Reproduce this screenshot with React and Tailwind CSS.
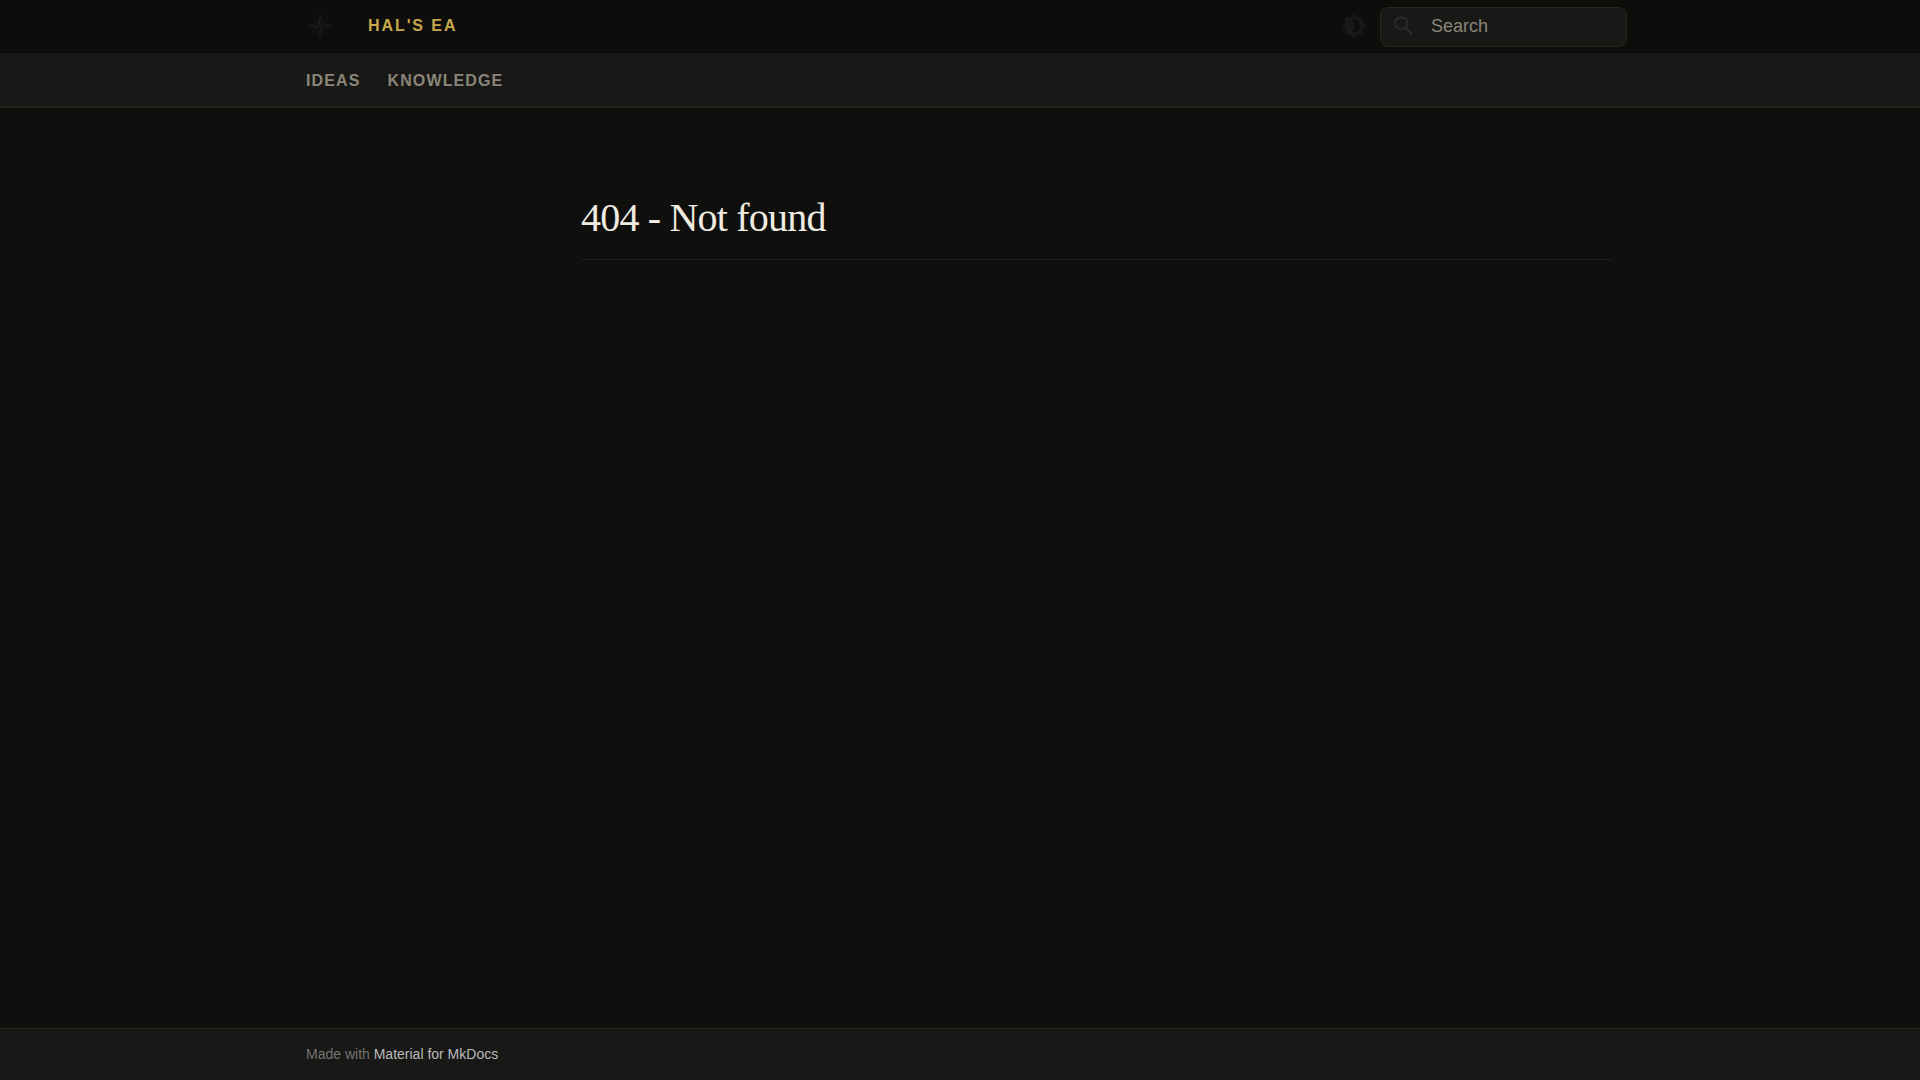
import React, { useState } from 'react';
import { MdSearch } from 'react-icons/md';

const tabs = [
  { label: 'IDEAS', href: '#ideas' },
  { label: 'KNOWLEDGE', href: '#knowledge' }
];

const CompassRose = ({ className }) => (
  <svg viewBox="0 0 24 24" className={className} fill="currentColor" aria-hidden="true">
    <path
      fillRule="evenodd"
      d="M12 0L14.8 9.2L24 12L14.8 14.8L12 24L9.2 14.8L0 12L9.2 9.2ZM12.3 11V5L13.6 10.4ZM13 12.3H19L13.6 13.6ZM11.7 13V19L10.4 13.6ZM11 11.7H5L10.4 10.4Z"
    />
    <path d="M4.8 4.8L8.3 6.2L6.2 8.3ZM19.2 4.8L17.8 8.3L15.7 6.2ZM19.2 19.2L15.7 17.8L17.8 15.7ZM4.8 19.2L6.2 15.7L8.3 17.8Z" />
  </svg>
);

const Brightness = ({ className }) => (
  <svg viewBox="0 0 24 24" className={className} fill="currentColor" aria-hidden="true">
    <path d="M12 18c-.89 0-1.74-.2-2.5-.55C11.56 16.5 13 14.42 13 12s-1.44-4.5-3.5-5.45C10.26 6.2 11.11 6 12 6a6 6 0 0 1 6 6 6 6 0 0 1-6 6m8-9.31V4h-4.69L12 .69 8.69 4H4v4.69L.69 12 4 15.31V20h4.69L12 23.31 15.31 20H20v-4.69L23.31 12z" />
  </svg>
);

const Header = () => {
  const [query, setQuery] = useState('');

  return (
    <header className="bg-[#0d0d0b]">
      <div className="max-w-[1342px] mx-auto pl-[18px] pr-1 h-[53px] flex items-center">
        <a href="#home" aria-label="Home" className="pb-px text-[#181816]">
          <CompassRose className="w-[26px] h-[26px]" />
        </a>
        <a href="#home" className="ml-[35px] pb-px text-base font-bold tracking-[0.12em] text-[#c9a84c]">
          HAL'S EA
        </a>
        <button type="button" aria-label="Toggle theme" className="ml-auto mr-[13px] pb-px text-[#181816]">
          <Brightness className="w-[26px] h-[26px]" />
        </button>
        <label className="flex items-center w-[247px] h-10 pl-[10px] pr-3 pb-[2px] rounded-lg border border-[#2a261a] bg-[#181816]">
          <MdSearch className="w-[26px] h-[26px] shrink-0 text-[#2b2b29]" />
          <input
            type="text"
            aria-label="Search"
            placeholder="Search"
            value={query}
            onChange={(e) => setQuery(e.target.value)}
            className="ml-[14px] w-full min-w-0 bg-transparent text-lg text-[#8a8578] placeholder:text-[#8a8578] outline-none"
          />
        </label>
      </div>
    </header>
  );
};

const App = () => {
  return (
    <div className="min-h-screen flex flex-col bg-[#0f0f0d] font-['Liberation_Sans',sans-serif]">
      <Header />

      {/* Tabs */}
      <nav className="bg-[#181816] border-b-2 border-[#25221a]">
        <ul className="max-w-[1342px] mx-auto px-[17px] h-[53px] flex items-center gap-[27px]">
          {tabs.map((tab) => (
            <li key={tab.label}>
              <a href={tab.href} className="block pt-[2px] text-base font-bold tracking-[0.07em] text-[#8a8578]">
                {tab.label}
              </a>
            </li>
          ))}
        </ul>
      </nav>

      {/* Content */}
      <main className="grow w-full max-w-[1342px] mx-auto pl-[292px] pr-[18px] pt-[84px]">
        <h1 className="pb-[15px] border-b border-[#1e1e1b] font-['Liberation_Serif',serif] text-[40px] leading-[52px] tracking-[-0.02em] text-[#f0ebe0]">
          404 - Not found
        </h1>
      </main>

      {/* Footer */}
      <footer className="bg-[#181816] border-t border-[#2a261a]">
        <div className="max-w-[1342px] mx-auto px-[17px] pb-[2px] h-[51px] flex items-center text-sm text-[#757573]">
          <p>
            Made with{' '}
            <a href="#mkdocs" className="text-[#bababa]">
              Material for MkDocs
            </a>
          </p>
        </div>
      </footer>
    </div>
  );
};

export default App;
